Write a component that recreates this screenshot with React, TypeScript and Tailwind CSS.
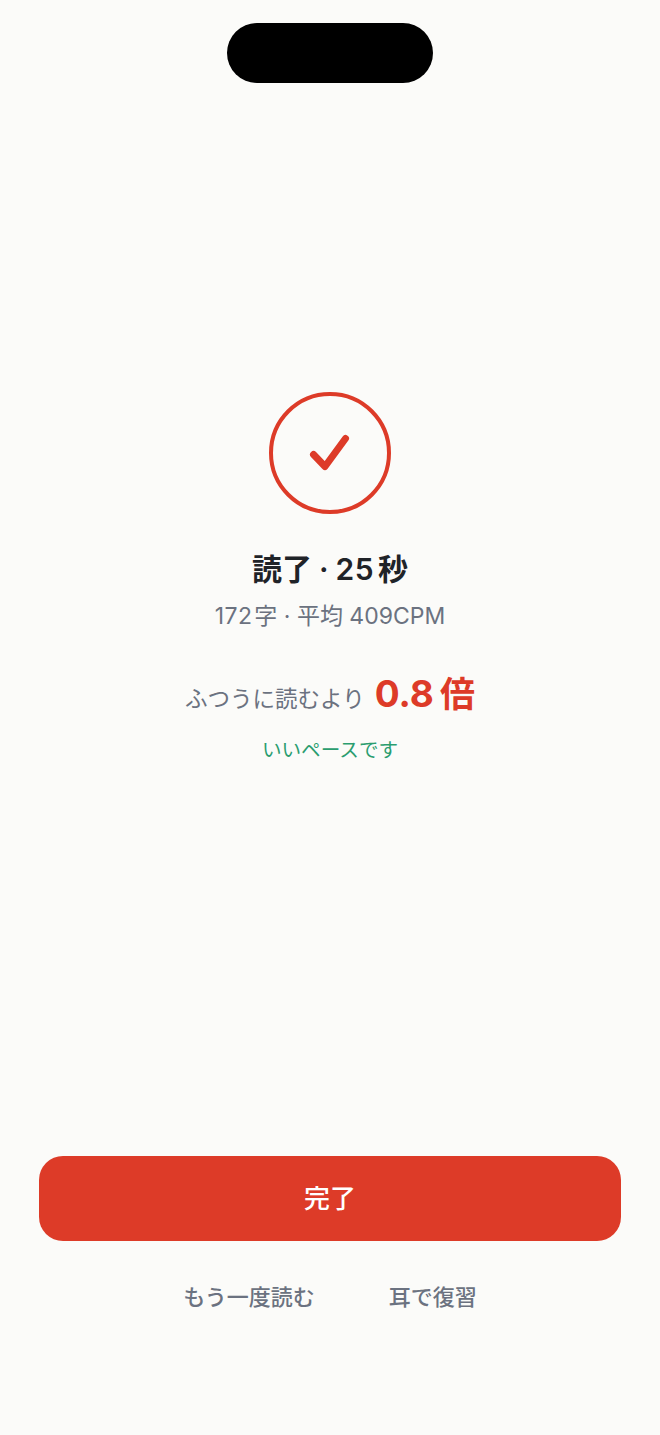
export default function App() {
  return (
    <div className="flex h-[1435px] w-[660px] flex-col items-center overflow-hidden bg-[#fbfbf9] font-['Inter','Noto_Sans_CJK_JP',sans-serif]">
      <div className="mt-[23px] h-[60px] w-[206px] shrink-0 rounded-[30px] bg-black" />
      <div className="mt-[309px] flex flex-col items-center">
        <div className="flex h-[122px] w-[122px] items-center justify-center rounded-full border-[4.5px] border-[#dd3b28]">
          <svg width="44" height="40" viewBox="0 0 44 40" fill="none">
            <path d="M5.5 21.5 L17 33.5 L37.5 5.5" stroke="#dd3b28" strokeWidth="7" strokeLinecap="round" strokeLinejoin="round" />
          </svg>
        </div>
        <div className="mt-[37px] flex h-[36px] items-center text-[30px] font-semibold leading-[36px] text-[#1f2328]">
          <span>読了</span>
          <span className="ml-[7px]">·</span>
          <span className="ml-[7px] tracking-[0.5px]">25</span>
          <span className="ml-[4px]">秒</span>
        </div>
        <div className="mt-[15px] flex h-[28px] items-center text-[23px] leading-[28px] text-[#6b7280]">
          <span className="tracking-[0.4px]">172</span>
          <span className="ml-[2px]">字 · 平均 409CPM</span>
        </div>
        <div className="mt-[36px] flex h-[46px] items-baseline">
          <span className="text-[22.5px] text-[#6b7280]">ふつうに読むより</span>
          <span className="ml-[10px] text-[37px] font-bold text-[#dd3b28]">0.8</span>
          <span className="ml-[6px] text-[35px] font-bold text-[#dd3b28]">倍</span>
        </div>
        <div className="mt-[24px] h-[28px] text-[19.6px] leading-[28px] text-[#2a9d6f]">いいペースです</div>
      </div>
      <button className="mt-auto flex h-[85px] w-[582px] items-center justify-center rounded-[24px] bg-[#dd3b28] text-[26px] font-medium text-white">
        完了
      </button>
      <div className="mb-[124px] mt-[42px] flex h-[28px] items-center gap-[74px] text-[22px] font-medium leading-[28px] text-[#6b7280]">
        <span>もう一度読む</span>
        <span>耳で復習</span>
      </div>
    </div>
  );
}
